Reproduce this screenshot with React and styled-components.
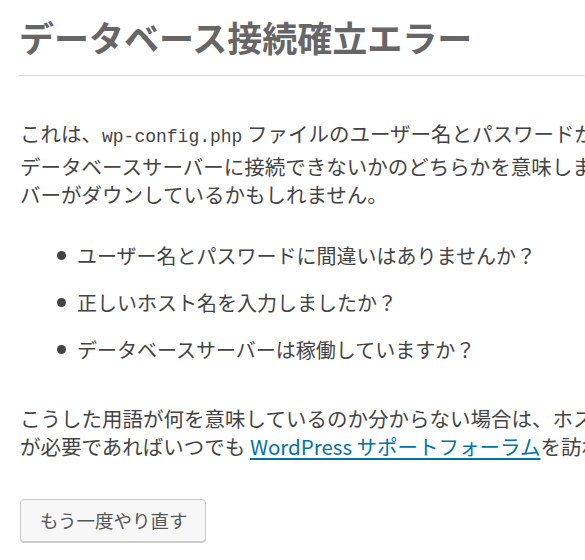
import React from "react";
import styled, { createGlobalStyle } from "styled-components";

const Global = createGlobalStyle`
  html, body { margin: 0; padding: 0; background: #fff; }
  body { overflow: hidden; width: 585px; height: 560px; }
`;

const Page = styled.div`
  width: 1000px;
  padding: 15px 0 0 19px;
  box-sizing: border-box;
  color: #444;
  font-family: "Noto Sans CJK JP", "Noto Sans", sans-serif;
`;

const Title = styled.h1`
  margin: 0;
  font-size: 35px;
  line-height: 44px;
  font-weight: 700;
  color: #666;
  padding-bottom: 16px;
  border-bottom: 1px solid #dadada;
  white-space: nowrap;
`;

const Para = styled.p`
  margin: ${(p) => p.$top}px 0 0 1px;
  font-size: 20.5px;
  line-height: 28.5px;
  white-space: nowrap;
`;

const Code = styled.code`
  font-family: "Liberation Mono", "DejaVu Sans Mono", monospace;
  font-size: 18px;
`;

const List = styled.ul`
  list-style: none;
  margin: 30px 0 0;
  padding: 0 0 0 38px;
`;

const Item = styled.li`
  display: flex;
  align-items: center;
  gap: 11px;
  font-size: 20px;
  line-height: 33px;
  margin-bottom: 14px;
  white-space: nowrap;
  &::before {
    content: "";
    width: 9px;
    height: 9px;
    border-radius: 50%;
    background: #444;
    flex: none;
  }
`;

const Link = styled.a`
  color: #0073aa;
  text-decoration: underline;
  text-underline-offset: 3px;
`;

const Button = styled.a`
  display: inline-block;
  margin-top: 38px;
  margin-left: 1px;
  height: 43px;
  line-height: 41px;
  padding: 0 18px 0 19px;
  box-sizing: border-box;
  font-size: 18.5px;
  color: #555;
  background: #f7f7f7;
  border: 1px solid #ccc;
  border-radius: 4px;
  box-shadow: 0 1px 0 #ccc;
  text-decoration: none;
  cursor: pointer;
`;

export default function App() {
  return (
    <>
      <Global />
      <Page>
        <Title>データベース接続確立エラー</Title>
        <Para $top={43}>
          これは、<Code>wp-config.php</Code> ファイルのユーザー名とパスワードが正しくないか、<Code>localhost</Code> の
          <br />
          データベースサーバーに接続できないかのどちらかを意味します。ホストのデータベースサー
          <br />
          バーがダウンしているかもしれません。
        </Para>
        <List>
          <Item>ユーザー名とパスワードに間違いはありませんか？</Item>
          <Item>正しいホスト名を入力しましたか？</Item>
          <Item>データベースサーバーは稼働していますか？</Item>
        </List>
        <Para $top={38}>
          こうした用語が何を意味しているのか分からない場合は、ホスティング会社に連絡してください。さらにヘルプ
          <br />
          が必要であればいつでも <Link href="#">WordPress サポートフォーラム</Link>を訪れてください。
        </Para>
        <Button>もう一度やり直す</Button>
      </Page>
    </>
  );
}
